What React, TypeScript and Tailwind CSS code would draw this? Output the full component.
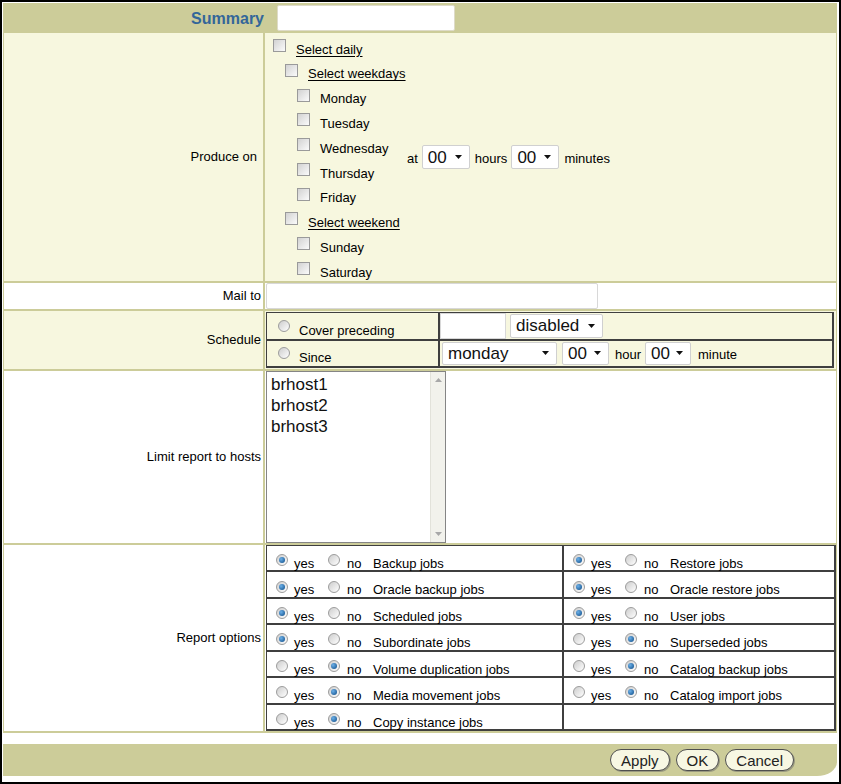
import { FC } from 'react';

const Checkbox: FC = () => (
    <span className="inline-block w-[13px] h-[13px] shrink-0 border border-[#9a9a9a] bg-linear-to-br from-[#d2d2d2] to-[#fbfbfb]" />
);

const Radio: FC<{ on?: boolean; className?: string }> = ({ on, className = '' }) => (
    <span className={`inline-flex w-[12px] h-[12px] shrink-0 items-center justify-center rounded-full border border-[#9c9c9c] bg-linear-to-br from-[#cdcdcd] to-white ${className}`}>
        {on && <span className="w-[6px] h-[6px] rounded-full bg-[radial-gradient(circle_at_35%_35%,#6cb0e8,#0b4a86)]" />}
    </span>
);

const Arrow: FC = () => (
    <svg width="7" height="4" viewBox="0 0 7 4" className="shrink-0">
        <path d="M0 0h7L3.5 4z" fill="#111" />
    </svg>
);

const Dropdown: FC<{ value: string; className: string }> = ({ value, className }) => (
    <span className={`flex items-center justify-between shrink-0 bg-white border border-[#d0d0d0] rounded-[2px] pl-[5px] pr-[7px] text-[17px] leading-none text-[#111] ${className}`}>
        <span>{value}</span>
        <Arrow />
    </span>
);

const indents = ['pl-[7px]', 'pl-[19px]', 'pl-[31px]'];

const days = [
    { label: 'Select daily', level: 0, link: true },
    { label: 'Select weekdays', level: 1, link: true },
    { label: 'Monday', level: 2 },
    { label: 'Tuesday', level: 2 },
    { label: 'Wednesday', level: 2 },
    { label: 'Thursday', level: 2 },
    { label: 'Friday', level: 2 },
    { label: 'Select weekend', level: 1, link: true },
    { label: 'Sunday', level: 2 },
    { label: 'Saturday', level: 2 },
];

const options: [string, boolean][][] = [
    [['Backup jobs', true], ['Restore jobs', true]],
    [['Oracle backup jobs', true], ['Oracle restore jobs', true]],
    [['Scheduled jobs', true], ['User jobs', true]],
    [['Subordinate jobs', true], ['Superseded jobs', false]],
    [['Volume duplication jobs', false], ['Catalog backup jobs', false]],
    [['Media movement jobs', false], ['Catalog import jobs', false]],
    [['Copy instance jobs', false]],
];

const Option: FC<{ label: string; yes: boolean }> = ({ label, yes }) => (
    <div className="bg-white flex items-center pl-[9px] text-[13px]">
        <Radio on={yes} className="mt-[4px]" />
        <span className="ml-[6px] w-[34px] mt-[11px]">yes</span>
        <Radio on={!yes} className="mt-[4px]" />
        <span className="ml-[7px] w-[26px] mt-[11px]">no</span>
        <span className="mt-[11px]">{label}</span>
    </div>
);

const Label: FC<{ text: string; bg: string }> = ({ text, bg }) => (
    <div className={`flex items-center justify-end pr-[2px] text-[13px] ${bg}`}>{text}</div>
);

const App: FC = () => {
    return (
        <div className="w-[841px] h-[784px] border-2 border-black bg-white pt-[1px] pl-[1px] pr-[2px] font-['Liberation_Sans',Arial,sans-serif] text-black">
            {/* header */}
            <div className="flex items-center h-[30px] bg-[#cccc99]">
                <div className="w-[261px] text-right text-[16px] font-bold text-[#336699] mt-[2px]">Summary</div>
                <span className="ml-[13px] w-[178px] h-[26px] bg-white border border-[#dedbc8] rounded-[2px]" />
            </div>

            <div className="grid grid-cols-[259px_1fr] grid-rows-[248px_26px_58px_172px_186px] gap-[2px] bg-[#cccc99] px-[1px] pb-[2px]">
                {/* produce on */}
                <div className="flex items-center justify-end pr-[6px] text-[13px] bg-[#f7f7df]">Produce on</div>
                <div className="bg-[#f7f7df] pl-[1px] flex items-center text-[13px]">
                    <div className="w-[141px] flex flex-col">
                        {days.map((d) => (
                            <div key={d.label} className={`flex items-center h-[24.8px] ${indents[d.level]}`}>
                                <Checkbox />
                                <span className={`ml-[10px] mt-[8px] whitespace-nowrap ${d.link ? 'underline underline-offset-2' : ''}`}>{d.label}</span>
                            </div>
                        ))}
                    </div>
                    <span className="mt-[3px]">at</span>
                    <Dropdown value="00" className="ml-[4px] w-[48px] h-[24px]" />
                    <span className="ml-[5px] mt-[3px]">hours</span>
                    <Dropdown value="00" className="ml-[4px] w-[48px] h-[24px]" />
                    <span className="ml-[5px] mt-[3px]">minutes</span>
                </div>

                {/* mail to */}
                <Label text="Mail to" bg="bg-white" />
                <div className="bg-white pl-[1px]">
                    <span className="block w-[332px] h-full bg-white border border-[#d8d8d8] rounded-[2px]" />
                </div>

                {/* schedule */}
                <Label text="Schedule" bg="bg-[#f7f7df]" />
                <div className="bg-[#f7f7df] pl-[1px] pr-[2px] py-[1px]">
                    <div className="h-full grid grid-cols-[171px_1fr] grid-rows-2 gap-[2px] bg-[#3f3f3f] pl-[1px] pt-[1px] pr-[2px] pb-[2px] text-[13px]">
                        <div className="bg-[#f7f7df] flex items-center pl-[11px]">
                            <Radio />
                            <span className="ml-[9px] mt-[9px]">Cover preceding</span>
                        </div>
                        <div className="bg-[#f7f7df] flex items-center">
                            <span className="w-[66px] h-full bg-white border border-[#d8d8d8]" />
                            <Dropdown value="disabled" className="ml-[4px] w-[93px] h-[24px]" />
                        </div>
                        <div className="bg-[#f7f7df] flex items-center pl-[11px]">
                            <Radio />
                            <span className="ml-[9px] mt-[8px]">Since</span>
                        </div>
                        <div className="bg-[#f7f7df] flex items-center pl-[2px]">
                            <Dropdown value="monday" className="w-[115px] h-[23px]" />
                            <Dropdown value="00" className="ml-[5px] w-[47px] h-[23px]" />
                            <span className="ml-[6px] mt-[3px]">hour</span>
                            <Dropdown value="00" className="ml-[4px] w-[46px] h-[23px]" />
                            <span className="ml-[7px] mt-[3px]">minute</span>
                        </div>
                    </div>
                </div>

                {/* hosts */}
                <Label text="Limit report to hosts" bg="bg-white" />
                <div className="bg-white pl-[1px]">
                    <div className="w-[180px] h-full border border-[#858585] bg-white flex">
                        <div className="flex-1 pl-[4px] pt-[2px] text-[17px] leading-[21px] text-[#111]">
                            <div>brhost1</div>
                            <div>brhost2</div>
                            <div>brhost3</div>
                        </div>
                        <div className="w-[15px] bg-[#f2f2ec] border-l border-[#e2e2da] flex flex-col items-center justify-between py-[6px]">
                            <svg width="7" height="4" viewBox="0 0 7 4"><path d="M0 4h7L3.5 0z" fill="#a8a8a8" /></svg>
                            <svg width="7" height="4" viewBox="0 0 7 4"><path d="M0 0h7L3.5 4z" fill="#a8a8a8" /></svg>
                        </div>
                    </div>
                </div>

                {/* report options */}
                <Label text="Report options" bg="bg-white" />
                <div className="bg-white pl-[1px]">
                    <div className="h-full grid grid-cols-[295px_1fr] grid-rows-7 gap-[2px] bg-[#3f3f3f] pl-[1px] pt-[1px] pr-[2px] pb-[2px]">
                        {options.flatMap((row, i) =>
                            row.length === 2
                                ? row.map(([label, yes]) => <Option key={label} label={label} yes={yes} />)
                                : [
                                      <Option key={row[0][0]} label={row[0][0]} yes={row[0][1]} />,
                                      <div key={`empty-${i}`} className="bg-white" />,
                                  ]
                        )}
                    </div>
                </div>
            </div>

            {/* footer */}
            <div className="mt-[11px] h-[32px] bg-[#cccc99] rounded-br-[20px_14px] flex items-center justify-end pr-[43px] gap-[6px]">
                {['Apply', 'OK', 'Cancel'].map((b) => (
                    <button
                        key={b}
                        className="h-[22px] px-[10px] rounded-full border border-[#4f4f4f] bg-[#f7f7e3] text-[15px] leading-none text-[#222] shadow-[1px_1px_0_#9a9a80]"
                    >
                        {b}
                    </button>
                ))}
            </div>
        </div>
    );
};

export default App;
